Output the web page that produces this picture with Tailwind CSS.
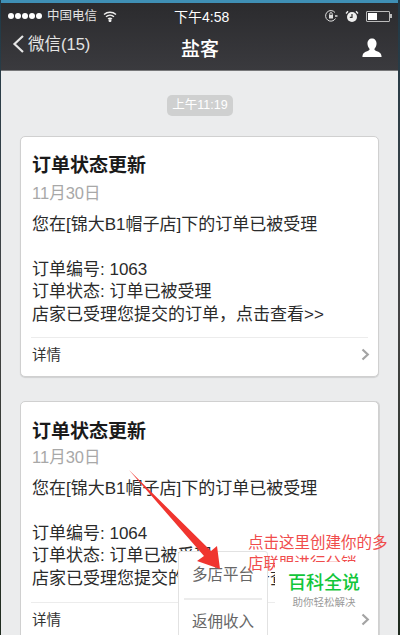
<!DOCTYPE html>
<html>
<head>
<meta charset="utf-8">
<script src="https://cdn.jsdelivr.net/npm/@tailwindcss/browser@4"></script>
</head>
<body class="m-0">
<div class="relative w-[400px] h-[635px] overflow-hidden bg-[#ebeced] font-['Liberation_Sans','Noto_Sans_CJK_SC',sans-serif] text-[#222]">
  <div class="h-[3px] bg-[#3f8fb5]"></div>
  <header class="h-[68px] bg-gradient-to-b from-[#2b2b2e] to-[#3a3a3e] border-b border-[#77787a] text-white">
    <div class="relative h-[26px] flex items-center justify-between pl-[8px] pr-[8px] text-[12.500px]">
      <div class="flex items-center gap-[5px] text-[#e2e2e2]">
        <span class="flex gap-[1px]">
          <span class="w-[6px] h-[6px] rounded-full bg-white"></span><span class="w-[6px] h-[6px] rounded-full bg-white"></span><span class="w-[6px] h-[6px] rounded-full bg-white"></span><span class="w-[6px] h-[6px] rounded-full bg-white"></span><span class="w-[6px] h-[6px] rounded-full bg-white"></span>
        </span>
        <span>中国电信</span>
        <svg class="ml-[1px]" width="14" height="11" viewBox="0 0 14 11" fill="none" stroke="#eee" stroke-width="1.4"><path d="M1 3.5C4.5 .5 9.5 .5 13 3.5M3 5.8C5.3 3.8 8.7 3.8 11 5.8M5 8C6.2 7 7.8 7 9 8"/><circle cx="7" cy="9.6" r=".8" fill="#eee"/></svg>
      </div>
      <span class="absolute left-[174px] top-[6px] text-[14px] leading-[17px]">下午4:58</span>
      <div class="flex items-center gap-[7px]">
        <svg width="14" height="14" viewBox="0 0 14 14" fill="none" stroke="#ddd" stroke-width="1"><path d="M11.500 9.500A5.300 5.300 0 1 1 11 3.500"/><rect x="5" y="6" width="4" height="3.500" fill="#ddd" stroke="none"/><path d="M5.800 6V4.800a1.200 1.200 0 0 1 2.400 0V6" /><path d="M11 7h2.500" stroke-width="1.500"/></svg>
        <svg width="14" height="13" viewBox="0 0 14 13" fill="none"><circle cx="7" cy="7" r="5" fill="#eee"/><path d="M7 4v3.300H4.800" stroke="#333" stroke-width="1.200"/><path d="M1 3.500 3 1.200M13 3.500 11 1.200" stroke="#eee" stroke-width="1.300"/></svg>
        <div class="flex items-center">
          <div class="w-[24px] h-[11px] border border-[#bbb] rounded-[1px] p-[1px]"><div class="w-[9px] h-full bg-white"></div></div>
          <div class="w-[2px] h-[4px] bg-[#bbb]"></div>
        </div>
      </div>
    </div>
    <div class="relative h-[42px] flex items-center justify-center">
      <div class="absolute left-[12px] top-[4px] flex items-center text-[#e4e4e4]">
        <svg width="13" height="20" viewBox="0 0 13 20" fill="none" stroke="#e6e6e6" stroke-width="2.200"><path d="M11 2 2.500 10 11 18"/></svg>
        <span class="ml-[3px] text-[16.500px] leading-[22px]">微信(15)</span>
      </div>
      <span class="text-[19px] leading-[24px] font-medium">盐客</span>
      <svg class="absolute left-[362px] top-[9px]" width="20" height="20" viewBox="0 0 22 22" fill="#fff"><path d="M11 .5c3 0 5 2.300 5 5.600 0 2.400-1 4.600-2.400 6 .1 1.300.9 1.800 2.700 2.600 2.200.9 4.700 1.600 5.200 5.300v.8H.5v-.8c.5-3.700 3-4.400 5.200-5.300 1.800-.8 2.600-1.300 2.700-2.600C7 10.700 6 8.500 6 6.100 6 2.800 8 .5 11 .5z"/></svg>
    </div>
  </header>

  <div class="flex flex-col items-center pt-[24px]">
    <span class="h-[21px] w-[66px] flex items-center justify-center rounded-[5px] bg-[#cfd0d0] text-white text-[12.500px]">上午11:19</span>
  </div>

  <article class="absolute left-[20px] top-[136px] w-[359px] h-[241px] bg-white rounded-[5px] border border-[#d0d0d0] shadow-[0_1px_1px_rgba(0,0,0,0.12)]">
    <div class="pl-[11px] pt-[16px]">
      <h2 class="text-[19px] leading-[26px] font-bold text-[#1a1a1a]">订单状态更新</h2>
      <p class="text-[16.500px] leading-[22px] mt-[3px] text-[#a8a8a8]">11月30日</p>
      <div class="mt-[10px] text-[17px] leading-[22.500px] text-[#2b2b2b]">
        <p>您在[锦大B1帽子店]下的订单已被受理</p>
        <p class="h-[22px]"></p>
        <p>订单编号: 1063</p>
        <p>订单状态: 订单已被受理</p>
        <p>店家已受理您提交的订单，点击查看&gt;&gt;</p>
      </div>
    </div>
    <div class="absolute left-[10px] right-[10px] top-[200px] border-t border-[#ececec]"></div>
    <div class="absolute left-[11px] top-[206px] text-[14.500px] leading-[24px] text-[#333]">详情</div>
    <svg class="absolute left-[340px] top-[211px]" width="9" height="13" viewBox="0 0 9 13" fill="none" stroke="#a4a4a4" stroke-width="2.200"><path d="M1.500 1.500 6.800 6.500 1.500 11.500"/></svg>
  </article>

  <article class="absolute left-[20px] top-[401px] w-[359px] h-[241px] bg-white rounded-[5px] border border-[#d0d0d0] shadow-[1px_0_0_rgba(0,0,0,0.1)]">
    <div class="pl-[11px] pt-[17px]">
      <h2 class="text-[19px] leading-[26px] font-bold text-[#1a1a1a]">订单状态更新</h2>
      <p class="text-[16.500px] leading-[22px] mt-[1px] text-[#a8a8a8]">11月30日</p>
      <div class="mt-[10px] text-[17px] leading-[22.500px] text-[#2b2b2b]">
        <p>您在[锦大B1帽子店]下的订单已被受理</p>
        <p class="h-[22px]"></p>
        <p>订单编号: 1064</p>
        <p>订单状态: 订单已被受理</p>
        <p>店家已受理您提交的订单，点击查看&gt;&gt;</p>
      </div>
    </div>
    <div class="absolute left-[10px] right-[10px] top-[200px] border-t border-[#ececec]"></div>
    <div class="absolute left-[11px] top-[206px] text-[14.500px] leading-[24px] text-[#333]">详情</div>
    <svg class="absolute left-[340px] top-[211px]" width="9" height="13" viewBox="0 0 9 13" fill="none" stroke="#a4a4a4" stroke-width="2.200"><path d="M1.500 1.500 6.800 6.500 1.500 11.500"/></svg>
  </article>

  <div class="absolute left-[178px] top-[551px] w-[90px] h-[90px] bg-white border border-[#e2e2e2] rounded-[3px] text-[#666] text-[15.500px] text-center">
    <div class="h-[46px] leading-[46px]">多店平台</div>
    <div class="mx-[5px] border-t-2 border-[#ececec]"></div>
    <div class="h-[40px] leading-[44px]">返佣收入</div>
  </div>

  <div class="absolute left-[248px] top-[532px] w-[143px] text-[15.500px] leading-[21px] text-[#f04c4c]">点击这里创建你的多店联盟进行分销</div>

  <div class="absolute left-[275px] top-[562px] w-[98px] h-[46px] bg-white flex flex-col items-center pt-[10px]">
    <span class="text-[#12c63a] text-[18px] leading-[22px] font-medium">百科全说</span>
    <span class="text-[#999] text-[10.500px] leading-[14px] mt-[1px]">助你轻松解决</span>
  </div>

  <svg class="absolute left-0 top-0 pointer-events-none" width="400" height="635" viewBox="0 0 400 635"><path d="M129 470 L211 551 L217 546 L220 569 L197 561 L204 556 Z" fill="#f0352f"/></svg>

  <div class="absolute left-0 top-0 w-[1px] h-full bg-gradient-to-b from-[#1f3a48] via-[#444] to-[#1e2a1e]"></div>
  <div class="absolute right-0 top-0 w-[2px] h-full bg-gradient-to-b from-[#1f3a48] via-[#444] to-[#1e2a1e]"></div>
</div>
</body>
</html>
